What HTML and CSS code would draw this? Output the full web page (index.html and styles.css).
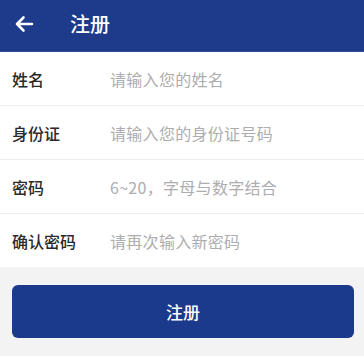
FILE: index.html
```html
<!DOCTYPE html>
<html lang="zh">
<head>
<meta charset="utf-8">
<link rel="stylesheet" href="styles.css">
</head>
<body>
<div class="page">
  <header class="topbar">
    <svg class="back" width="20" height="18" viewBox="0 0 20 18">
      <path d="M18 9H3M9.5 2.5L3 9l6.5 6.5" fill="none" stroke="#fff" stroke-width="2.6" stroke-linecap="round" stroke-linejoin="round"/>
    </svg>
    <span class="title">注册</span>
  </header>
  <div class="form">
    <div class="row"><span class="label">姓名</span><span class="ph">请输入您的姓名</span></div>
    <div class="row"><span class="label">身份证</span><span class="ph">请输入您的身份证号码</span></div>
    <div class="row"><span class="label">密码</span><span class="ph">6~20，字母与数字结合</span></div>
    <div class="row"><span class="label">确认密码</span><span class="ph">请再次输入新密码</span></div>
  </div>
  <div class="actions">
    <button class="submit">注册</button>
  </div>
</div>
</body>
</html>
```

FILE: styles.css
```css
html, body {
  margin: 0;
  padding: 0;
}
body {
  width: 364px;
  height: 356px;
  background: #f3f3f4;
  font-family: "Noto Sans CJK SC", "Noto Sans", sans-serif;
  overflow: hidden;
}
.page {
  display: flex;
  flex-direction: column;
}
.topbar {
  height: 52px;
  background: #1d3a8b;
  display: flex;
  align-items: center;
  padding-left: 14px;
  box-sizing: border-box;
  border-bottom: 1px solid #2f4c9a;
}
.back {
  display: block;
  margin-top: -4px;
}
.title {
  color: #fff;
  font-size: 20px;
  font-weight: 500;
  margin-left: 36px;
  margin-top: -4px;
}
.form {
  background: #fff;
}
.row {
  height: 53px;
  display: flex;
  align-items: center;
  border-bottom: 1px solid #ececee;
  padding-left: 12px;
}
.row:last-child {
  border-bottom: none;
}
.label {
  width: 98px;
  font-size: 16px;
  font-weight: 500;
  color: #2a2a2a;
}
.ph {
  font-size: 16px;
  color: #adadb0;
  letter-spacing: 0.3px;
}
.actions {
  padding: 18px 10px 0 12px;
}
.submit {
  width: 100%;
  height: 53px;
  border: none;
  border-radius: 6px;
  background: #1b3a8b;
  color: #fff;
  font-family: "Noto Sans CJK SC", "Noto Sans", sans-serif;
  font-size: 17px;
  font-weight: 500;
  display: block;
}
```
